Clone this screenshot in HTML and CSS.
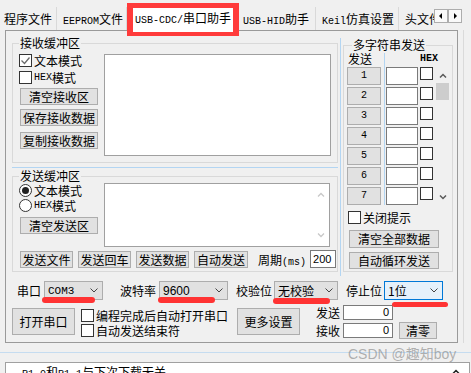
FILE: index.html
```html
<!DOCTYPE html>
<html>
<head>
<meta charset="utf-8">
<link rel="stylesheet" href="styles.css">
</head>
<body>
<div class="tabbar">
  <div class="tab t1">程序文件</div>
  <div class="tab t2"><span class="m">EEPROM</span>文件</div>
  <div class="tab sel"><span class="m">USB-CDC/</span>串口助手</div>
  <div class="tab t4"><span class="m">USB-HID</span>助手</div>
  <div class="tab t5"><span class="m">Keil</span>仿真设置</div>
  <div class="tab t6">头文件</div>
  <div class="tabnav">
    <div class="navbtn"><svg width="12" height="12" viewBox="0 0 12 12"><polygon points="4,6 7,3 7,9" fill="#000"/></svg></div>
    <div class="navbtn"><svg width="12" height="12" viewBox="0 0 12 12"><polygon points="5,3 8,6 5,9" fill="#000"/></svg></div>
  </div>
</div>

<div class="main">
  <div class="pane">
    <div class="top">
      <div class="leftcol">
        <div class="group recv">
          <div class="legend">接收缓冲区</div>
          <div class="gbody">
            <div class="ctrl">
              <div class="chk r1"><span class="box"><svg width="11" height="11" viewBox="0 0 11 11"><polyline points="1.5,5.5 4.5,8.5 9.5,2.5" fill="none" stroke="#6a6a6a" stroke-width="1.3"/></svg></span>文本模式</div>
              <div class="chk r2"><span class="box"></span><span class="m">HEX</span>模式</div>
              <div class="btn b1">清空接收区</div>
              <div class="btn b2">保存接收数据</div>
              <div class="btn b3">复制接收数据</div>
            </div>
            <div class="area recvarea"></div>
          </div>
        </div>
        <div class="hsplit"></div>
        <div class="group send">
          <div class="legend">发送缓冲区</div>
          <div class="gbody">
            <div class="ctrl">
              <div class="chk s1"><span class="radio on"></span>文本模式</div>
              <div class="chk s2"><span class="radio"></span><span class="m">HEX</span>模式</div>
              <div class="btn b4">清空发送区</div>
            </div>
            <div class="area sendarea">
              <div class="sbar">
                <svg width="8" height="5" viewBox="0 0 8 5"><polyline points="1,4.5 4,1.5 7,4.5" fill="none" stroke="#c8c8c8" stroke-width="1.3"/></svg>
                <svg width="8" height="5" viewBox="0 0 8 5"><polyline points="1,0.5 4,3.5 7,0.5" fill="none" stroke="#c8c8c8" stroke-width="1.3"/></svg>
              </div>
            </div>
          </div>
          <div class="brow">
            <div class="btn sb w53">发送文件</div>
            <div class="btn sb w53">发送回车</div>
            <div class="btn sb w53">发送数据</div>
            <div class="btn sb w54">自动发送</div>
            <div class="period">周期<span class="m">(ms)</span></div>
            <div class="inp cyc">200</div>
          </div>
        </div>
      </div>
      <div class="vsplit"></div>
      <div class="rightcol">
        <div class="group multi">
          <div class="legend">多字符串发送</div>
          <div class="mgrid">
            <div class="mline"></div>
            <div class="mscroll">
              <svg class="su" width="8" height="5" viewBox="0 0 8 5"><polyline points="1,4.5 4,1.5 7,4.5" fill="none" stroke="#5a5a5a" stroke-width="1.5"/></svg>
              <div class="thumb"></div>
              <svg class="sd" width="8" height="5" viewBox="0 0 8 5"><polyline points="1,0.5 4,3.5 7,0.5" fill="none" stroke="#5a5a5a" stroke-width="1.5"/></svg>
            </div>
            <div class="mh1">发送</div>
            <div class="mh2 m">HEX</div>
            <div class="btn mb m">1</div><div class="minp"></div><div class="mbox"></div>
            <div class="btn mb m">2</div><div class="minp"></div><div class="mbox"></div>
            <div class="btn mb m">3</div><div class="minp"></div><div class="mbox"></div>
            <div class="btn mb m">4</div><div class="minp"></div><div class="mbox"></div>
            <div class="btn mb m">5</div><div class="minp"></div><div class="mbox"></div>
            <div class="btn mb m">6</div><div class="minp"></div><div class="mbox"></div>
            <div class="btn mb m">7</div><div class="minp"></div><div class="mbox"></div>
          </div>
          <div class="chk closetip"><span class="box"></span>关闭提示</div>
          <div class="btn wide w1">清空全部数据</div>
          <div class="btn wide w2">自动循环发送</div>
        </div>
      </div>
    </div>

    <div class="bottom">
      <div class="row1">
        <div class="lbl l1">串口</div>
        <div class="combo c1"><span class="m cv">COM3</span><svg class="chev" width="8" height="5" viewBox="0 0 8 5"><polyline points="0.5,0.5 4,4 7.5,0.5" fill="none" stroke="#444" stroke-width="1"/></svg><i class="mark k1"></i></div>
        <div class="lbl l2">波特率</div>
        <div class="combo c2"><span class="cv">9600</span><svg class="chev" width="8" height="5" viewBox="0 0 8 5"><polyline points="0.5,0.5 4,4 7.5,0.5" fill="none" stroke="#444" stroke-width="1"/></svg><i class="mark k2"></i></div>
        <div class="lbl l3">校验位</div>
        <div class="combo c3"><span class="cv">无校验</span><svg class="chev" width="8" height="5" viewBox="0 0 8 5"><polyline points="0.5,0.5 4,4 7.5,0.5" fill="none" stroke="#444" stroke-width="1"/></svg><i class="mark k3"></i></div>
        <div class="lbl l3">停止位</div>
        <div class="combo c4"><span class="cv">1位</span><svg class="chev" width="8" height="5" viewBox="0 0 8 5"><polyline points="0.5,0.5 4,4 7.5,0.5" fill="none" stroke="#444" stroke-width="1"/></svg><i class="mark k4"></i></div>
      </div>
      <div class="row2">
        <div class="btn big open">打开串口</div>
        <div class="checks">
          <div class="chk"><span class="box"></span>编程完成后自动打开串口</div>
          <div class="chk"><span class="box"></span>自动发送结束符</div>
        </div>
        <div class="btn big more">更多设置</div>
        <div class="stats">
          <div class="srow"><span class="slbl">发送</span><div class="inp cnt">0</div></div>
          <div class="srow sr2"><span class="slbl">接收</span><div class="inp cnt">0</div><div class="btn clr">清零</div></div>
        </div>
      </div>
    </div>
  </div>
  <div class="rstrip"></div>
</div>

<div class="hsplit2"></div>
<div class="log">
  <div class="logtext"><span class="m">P1.0</span>和<span class="m">P1.1</span>与下次下载无关</div>
  <svg class="logup" width="8" height="5" viewBox="0 0 8 5"><polyline points="1,4.5 4,1.5 7,4.5" fill="none" stroke="#222" stroke-width="1.5"/></svg>
</div>

<div class="watermark">CSDN @趣知boy</div>
</body>
</html>
```

FILE: styles.css
```css
* { box-sizing: border-box; margin: 0; padding: 0; }
html, body { width: 471px; height: 373px; overflow: hidden; }
body {
  background: #f0f0f0;
  font-family: "Noto Sans CJK SC", sans-serif;
  font-size: 12px;
  line-height: 14px;
  color: #000;
  position: relative;
}
.m { font-family: "Liberation Mono", monospace; font-size: 10px; }

/* tabs */
.tabbar { display: flex; height: 30px; align-items: flex-start; }
.tab {
  flex: none;
  margin-top: 7px;
  height: 23px;
  padding-top: 5px;
  border-right: 1px solid #d9d9d9;
  white-space: nowrap;
  overflow: hidden;
}
.t1 { width: 57px; padding-left: 4px; }
.t2 { width: 70px; padding-left: 6px; }
.sel {
  position: relative;
  z-index: 2;
  margin-top: 3px;
  height: 33px;
  width: 112px;
  border: 5px solid #ff3b3b;
  border-left-width: 6px;
  border-right-width: 6px;
  border-bottom-width: 4px;
  background: #fff;
  padding-left: 2px;
  padding-top: 3px;
}
.t4 { width: 77px; padding-left: 4px; }
.t5 { width: 83px; padding-left: 6px; }
.t6 { width: 35px; padding-left: 6px; border-right: none; }
.tabnav { display: flex; margin-top: 9px; }
.navbtn {
  width: 14px; height: 14px;
  border: 1px solid #adadad;
  background: #f9f9f9;
  display: flex; align-items: center; justify-content: center;
}

/* main pane */
.main { display: flex; height: 313px; }
.pane {
  margin-left: 5px;
  width: 453px;
  height: 313px;
  border: 1px solid #9a9a9a;
  background: #f0f0f0;
  display: flex;
  flex-direction: column;
}
.rstrip { margin-left: 5px; width: 1px; background: #dadada; }
.top { display: flex; height: 245px; flex: none; }
.leftcol { width: 334px; padding-left: 6px; display: flex; flex-direction: column; flex: none; }

.group { border: 1px solid #d9d9d9; display: flex; flex-direction: column; flex: none; }
.legend {
  align-self: flex-start;
  margin: -8px 0 0 6px;
  padding: 0 1px;
  background: #f0f0f0;
  line-height: 14px;
  white-space: nowrap;
}
.gbody { display: flex; }
.ctrl { margin-left: 6px; width: 85px; display: flex; flex-direction: column; flex: none; }

.chk { display: flex; align-items: center; height: 13px; white-space: nowrap; }
.box {
  width: 13px; height: 13px; flex: none;
  border: 1px solid #333;
  background: #fff;
  margin-right: 2px;
  display: flex; align-items: center; justify-content: center;
}
.radio {
  width: 13px; height: 13px; flex: none;
  border: 1px solid #333;
  border-radius: 50%;
  background: #fff;
  margin-right: 2px;
  display: flex; align-items: center; justify-content: center;
}
.radio.on::after { content: ""; width: 7px; height: 7px; border-radius: 50%; background: #222; }

.btn {
  background: #e1e1e1;
  border: 1px solid #adadad;
  display: flex; align-items: center; justify-content: center;
  white-space: nowrap;
  flex: none;
}

.recv { margin-top: 12px; width: 326px; height: 120px; }
.r1 { margin-top: 4px; }
.r2 { margin-top: 4px; }
.b1, .b2, .b3, .b4 { margin-left: 1px; width: 78px; height: 17px; }
.b1 { margin-top: 4px; }
.b2 { margin-top: 4px; }
.b3 { margin-top: 6px; }
.area { background: #fff; border: 1px solid #a0a0a0; flex: none; }
.recvarea { margin-top: 4px; width: 227px; height: 102px; }

.hsplit { margin-top: 4px; width: 326px; height: 1px; background: #b3d5f2; flex: none; }

.send { margin-top: 8px; width: 326px; height: 96px; }
.s1 { margin-top: 1px; }
.s2 { margin-top: 2px; }
.b4 { margin-top: 5px; }
.sendarea { width: 226px; height: 64px; display: flex; justify-content: flex-end; }
.sbar { width: 17px; display: flex; flex-direction: column; align-items: center; justify-content: space-between; padding: 8px 0 8px; }
.brow { display: flex; align-items: flex-start; margin: 4px 0 0 7px; }
.sb { height: 17px; margin-right: 5px; }
.w53 { width: 53px; }
.w54 { width: 54px; margin-right: 0; }
.period { margin-left: 10px; line-height: 17px; white-space: nowrap; }
.inp {
  background: #fff;
  border: 1px solid #7a7a7a;
  font-family: "Liberation Sans", sans-serif;
  font-size: 11px;
  flex: none;
}
.cyc { margin: -1px 0 0 4px; width: 26px; height: 18px; line-height: 16px; padding-left: 2px; }

.vsplit { width: 1px; margin-top: 7px; height: 238px; background: #b3d5f2; flex: none; }
.rightcol { margin-left: 2px; flex: none; }
.multi { margin-top: 14px; width: 110px; height: 227px; }
.multi .legend { margin-left: 8px; }
.mgrid {
  display: grid;
  grid-template-columns: 34px 3px 1px 1px 32px 2px 13px 2px 15px;
  grid-template-rows: 12px repeat(7, 18px);
  row-gap: 2px;
  margin: 1px 0 0 3px;
}
.mline { grid-column: 3; grid-row: 1 / 9; background: #b3d5f2; }
.mscroll { grid-column: 9; grid-row: 2 / 9; display: flex; flex-direction: column; align-items: center; }
.su { margin-top: 6px; }
.thumb { margin-top: 5px; width: 13px; height: 17px; background: #cdcdcd; }
.sd { margin-top: auto; margin-bottom: 5px; }
.mh1 { grid-column: 1; line-height: 12px; padding-left: 1px; white-space: nowrap; }
.mh2 { grid-column: 7; line-height: 12px; white-space: nowrap; font-weight: bold; }
.mb { grid-column: 1; }
.minp { grid-column: 5; background: #fff; border: 1px solid #7a7a7a; }
.mbox { grid-column: 7; align-self: start; width: 13px; height: 13px; border: 1px solid #333; background: #fff; }
.closetip { margin: 6px 0 0 4px; }
.wide { margin-left: 5px; width: 90px; }
.w1 { margin-top: 6px; height: 18px; }
.w2 { margin-top: 4px; height: 17px; }

/* bottom */
.bottom { display: flex; flex-direction: column; flex: none; }
.row1 { display: flex; align-items: center; height: 19px; margin-top: 5px; }
.lbl { white-space: nowrap; flex: none; }
.l1 { margin-left: 11px; width: 24px; }
.l2 { margin-left: 17px; width: 36px; }
.l3 { margin-left: 8px; width: 36px; }
.combo {
  position: relative;
  height: 19px;
  flex: none;
  display: flex; align-items: center;
  background: #e1e1e1;
  border: 1px solid #adadad;
  padding-left: 3px;
}
.cv { white-space: nowrap; }
.chev { margin-left: auto; margin-right: 4px; }
.c1 { margin-left: 3px; width: 59px; }
.c1 .cv { font-size: 11px; }
.c2 { margin-left: 3px; width: 69px; }
.c2 .cv { font-family: "Liberation Sans", sans-serif; font-size: 12px; }
.c3 { margin-left: 2px; width: 64px; }
.c4 { margin-left: 2px; width: 59px; border-color: #0078d7; background: #e5f1fb; }
.mark { position: absolute; height: 6px; background: #ff3333; border-radius: 3px; }
.k1 { left: -3px; width: 53px; top: 15px; }
.k2 { left: -2px; width: 57px; top: 15px; }
.k3 { left: -2px; width: 57px; top: 16px; }
.k4 { left: 7px; width: 56px; top: 20px; height: 5px; }

.row2 { display: flex; align-items: flex-start; margin-top: 5px; }
.big { margin-top: 3px; width: 63px; height: 27px; }
.open { margin-left: 6px; }
.checks { margin: 4px 0 0 6px; width: 147px; display: flex; flex-direction: column; gap: 2px; flex: none; }
.checks .box { margin-right: 2px; }
.more { margin-left: 9px; }
.stats { margin-left: 16px; display: flex; flex-direction: column; }
.srow { display: flex; align-items: center; height: 15px; }
.sr2 { margin-top: 2px; height: 17px; }
.slbl { width: 27px; white-space: nowrap; }
.cnt { width: 50px; height: 15px; line-height: 13px; text-align: right; padding-right: 3px; }
.clr { margin-left: 6px; width: 38px; height: 17px; }

/* log */
.hsplit2 { margin-top: 9px; height: 1px; background: #c5dcf0; }
.log {
  margin: 9px 0 0 5px;
  width: 465px;
  height: 30px;
  background: #fff;
  border: 1px solid #a0a0a0;
  display: flex;
  align-items: flex-start;
}
.logtext { padding: 2px 0 0 16px; white-space: nowrap; }
.logup { margin: 6px 9px 0 auto; }

.watermark {
  position: absolute;
  left: 348px;
  top: 346px;
  font-family: "Liberation Sans", "Noto Sans CJK SC", sans-serif;
  font-size: 14px;
  line-height: 16px;
  color: rgba(130, 130, 130, 0.6);
  white-space: nowrap;
}
```
